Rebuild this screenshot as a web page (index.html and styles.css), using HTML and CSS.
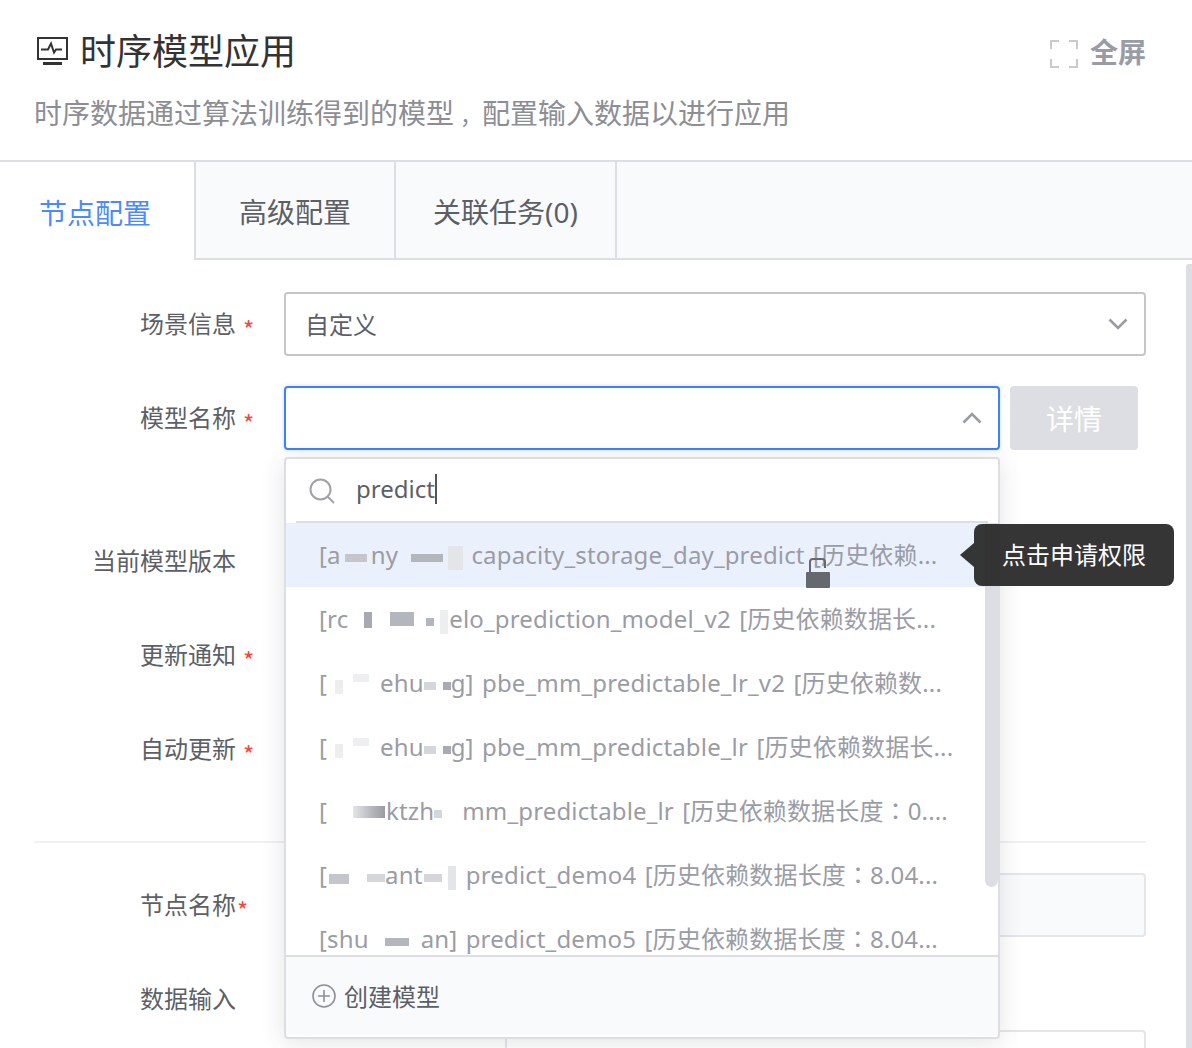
FILE: index.html
```html
<!DOCTYPE html>
<html>
<head>
  <meta charset="UTF-8">
  <title>时序模型应用</title>
  <link rel="stylesheet" href="styles.css">
</head>
<body>
<div class="page">
  <header class="head">
    <div class="head-top">
      <h1 class="title">
        <svg class="title-icon" viewBox="0 0 32 28" fill="none" stroke="#333" stroke-width="2">
          <rect x="2" y="1" width="29" height="21"/>
          <path d="M5 12.500h7l3-6 3 9 2-3h6"/>
          <path d="M7 26.500h19" stroke-width="3"/>
        </svg>
        <span class="title-text">时序模型应用</span>
      </h1>
      <div class="fullscreen">
        <svg class="full-icon" viewBox="0 0 28 28" fill="none" stroke="#c8cad0" stroke-width="2">
          <path d="M1 9V1h8M19 1h8v8M27 19v8h-8M9 27H1v-8"/>
        </svg>
        <span class="full-text">全屏</span>
      </div>
    </div>
    <p class="desc">时序数据通过算法训练得到的模型<span class="comma">，</span>配置输入数据以进行应用</p>
  </header>

  <nav class="tabs">
    <div class="tab tab-active">节点配置</div>
    <div class="tab">高级配置</div>
    <div class="tab">关联任务(0)</div>
  </nav>

  <main class="form">
    <div class="row">
      <label class="label">场景信息</label><span class="star">*</span>
      <div class="select">
        <span class="select-text">自定义</span>
        <svg class="chev" viewBox="0 0 20 12" fill="none" stroke="#9a9ca5" stroke-width="2.6"><path d="M1.5 1.5 10 10l8.500-8.500"/></svg>
      </div>
    </div>

    <div class="row">
      <label class="label">模型名称</label><span class="star">*</span>
      <div class="control">
        <div class="select select-open">
          <svg class="chev" viewBox="0 0 20 12" fill="none" stroke="#9a9ca5" stroke-width="2.6"><path d="M1.500 10.500 10 2l8.500 8.500"/></svg>
        </div>
        <button class="detail" type="button">详情</button>

        <div class="dropdown">
          <div class="search">
            <svg class="search-icon" viewBox="0 0 26 26" fill="none" stroke="#a0a2a8" stroke-width="2"><circle cx="11.500" cy="11.500" r="10"/><path d="m19 19 6 6"/></svg>
            <span class="search-text">predict</span><i class="caret"></i>
          </div>
          <ul class="options">
            <li class="option option-hover">[a<i class="smudge s1"></i>ny<i class="smudge s2"></i> capacity_storage_day_predict [历史依赖...
              <svg class="lock" viewBox="0 0 24 31"><path d="M4 16V5a3 3 0 0 1 3-3h9a3 3 0 0 1 3 3v6" fill="none" stroke="#666870" stroke-width="2"/><rect y="15" width="24" height="16" rx="1" fill="#666870"/></svg>
            </li>
            <li class="option">[rc<i class="smudge s3"></i>elo_prediction_model_v2 [历史依赖数据长...</li>
            <li class="option">[<i class="smudge s4"></i>ehu<i class="smudge s5"></i>g] pbe_mm_predictable_lr_v2 [历史依赖数...</li>
            <li class="option">[<i class="smudge s4"></i>ehu<i class="smudge s5"></i>g] pbe_mm_predictable_lr [历史依赖数据长...</li>
            <li class="option">[<i class="smudge s6"></i>ktzh<i class="smudge s7"></i>mm_predictable_lr [历史依赖数据长度<span class="punct">：</span>0....</li>
            <li class="option">[<i class="smudge s8"></i>ant<i class="smudge s9"></i> predict_demo4 [历史依赖数据长度<span class="punct">：</span>8.04...</li>
            <li class="option">[shu<i class="smudge s10"></i>an] predict_demo5 [历史依赖数据长度<span class="punct">：</span>8.04...</li>
          </ul>
          <div class="thumb"></div>
          <div class="create">
            <svg class="plus" viewBox="0 0 24 24" fill="none" stroke="#8e9098" stroke-width="1.600"><circle cx="12" cy="12" r="11"/><path d="M12 6v12M6 12h12"/></svg>
            <span class="create-text">创建模型</span>
          </div>
          <div class="tip">点击申请权限</div>
        </div>
      </div>
    </div>

    <div class="row row-version">
      <label class="label">当前模型版本</label>
    </div>
    <div class="row">
      <label class="label">更新通知</label><span class="star">*</span>
    </div>
    <div class="row row-last">
      <label class="label">自动更新</label><span class="star">*</span>
    </div>

    <hr class="divider">

    <div class="row">
      <label class="label">节点名称</label><span class="star star-tight">*</span>
      <div class="input"></div>
    </div>
    <div class="row row-data">
      <label class="label">数据输入</label>
    </div>
    <div class="data-box"></div>
  </main>

  <div class="page-bar"></div>
</div>
</body>
</html>
```

FILE: styles.css
```css
* {
  box-sizing: border-box;
}
body {
  margin: 0;
  font-family: "Noto Sans", "Noto Sans CJK SC", sans-serif;
  color: #5c5f66;
  background: #fff;
}
.page {
  position: relative;
  height: 1048px;
  overflow: hidden;
}
.punct {
  font-family: "Noto Sans CJK TC", sans-serif;
  line-height: 1;
}
.comma {
  display: inline-block;
  width: 28px;
  padding-left: 6px;
  font-size: 22px;
  line-height: 1;
}

/* Header */
.head {
  height: 160px;
  padding: 26px 46px 0 34px;
}
.head-top {
  display: flex;
  justify-content: space-between;
  align-items: center;
  height: 52px;
}
.title {
  display: flex;
  align-items: center;
  gap: 12px;
  margin: 0;
  font-size: 36px;
  font-weight: 400;
  color: #333;
}
.title-text {
  line-height: 52px;
}
.title-icon {
  width: 32px;
  height: 28px;
  margin: 0 0 2px 2px;
}
.fullscreen {
  display: flex;
  align-items: center;
  gap: 12px;
  font-size: 28px;
  font-weight: 700;
  color: #9a9ca5;
}
.full-text {
  padding-bottom: 2px;
}
.full-icon {
  width: 28px;
  height: 28px;
  margin-top: 4px;
}
.desc {
  margin: 15px 0 0;
  font-size: 28px;
  line-height: 40px;
  color: #8c8e94;
}

/* Tabs */
.tabs {
  display: flex;
  height: 100px;
  border-top: 2px solid #dcdee3;
  border-bottom: 2px solid #dcdee3;
  background: #f9fafc;
}
.tab {
  display: flex;
  align-items: center;
  justify-content: center;
  width: 200px;
  padding-top: 2px;
  border-right: 2px solid #dcdee3;
  font-size: 28px;
}
.tab:last-child {
  width: 221px;
}
.tab-active {
  width: 196px;
  height: 98px;
  padding-right: 4px;
  background: #fff;
  color: #4b8bf5;
}

/* Form */
.form {
  padding: 32px 46px 0 34px;
}
.row {
  display: flex;
  align-items: flex-start;
  height: 64px;
  margin-bottom: 30px;
}
.label {
  width: 202px;
  flex: none;
  text-align: right;
  font-size: 24px;
  line-height: 64px;
}
.star {
  width: 48px;
  flex: none;
  padding: 5px 0 0 7px;
  font-family: "Noto Sans CJK SC", sans-serif;
  font-size: 24px;
  line-height: 64px;
  color: #f5453c;
}
.star-tight {
  padding-left: 1px;
}
.row-version {
  margin-top: 79px;
}
.row-last {
  margin-bottom: 60px;
}
.row-data {
  margin-bottom: 0;
}
.select {
  position: relative;
  display: flex;
  align-items: center;
  flex: 1;
  height: 64px;
  padding: 0 19px;
  border: 2px solid #c4c6cc;
  border-radius: 4px;
  font-size: 24px;
}
.select-text {
  padding-bottom: 2px;
}
.chev {
  position: absolute;
  right: 16px;
  top: 24px;
  width: 20px;
  height: 12px;
}
.control {
  position: relative;
  display: flex;
  flex: 1;
  gap: 10px;
}
.select-open {
  flex: none;
  width: 716px;
  border-color: #3f80f5;
  box-shadow: 0 0 4px rgba(63, 128, 245, .3);
}
.detail {
  width: 128px;
  height: 64px;
  padding: 0;
  border: 0;
  border-radius: 4px;
  background: #dcdee3;
  color: #fff;
  font: inherit;
  font-size: 28px;
}
.divider {
  height: 2px;
  margin: 0 0 30px;
  border: 0;
  background: #f0f1f3;
}
.input {
  flex: 1;
  height: 64px;
  border: 2px solid #e4e6ea;
  border-radius: 4px;
  background: #f9fafc;
}
.data-box {
  height: 40px;
  margin: -1px 0 0 471px;
  border: 2px solid #e4e6ea;
  border-radius: 4px;
}

/* Dropdown */
.dropdown {
  position: absolute;
  left: 0;
  top: 71px;
  z-index: 2;
  width: 716px;
  height: 582px;
  border: 2px solid #dcdee3;
  border-radius: 4px;
  background: #fff;
  box-shadow: 0 4px 24px rgba(60, 64, 80, .14);
}
.search {
  position: relative;
  display: flex;
  align-items: center;
  height: 64px;
  margin: 0 10px;
  padding-left: 60px;
  border-bottom: 2px solid #dcdee3;
  font-size: 24px;
}
.search-text {
  padding-bottom: 4px;
}
.search-icon {
  position: absolute;
  left: 13px;
  top: 19px;
  width: 26px;
  height: 26px;
}
.caret {
  width: 2px;
  height: 30px;
  margin-bottom: 2px;
  background: #555;
}
.options {
  height: 432px;
  margin: 0;
  padding: 0;
  list-style: none;
  overflow: hidden;
  font-size: 24px;
  letter-spacing: .15px;
  word-spacing: 2px;
  color: #9a9ca5;
}
.option {
  position: relative;
  height: 64px;
  padding-left: 33px;
  line-height: 64px;
  white-space: nowrap;
}
.option-hover {
  background: #eaf1fd;
}
.lock {
  position: absolute;
  left: 520px;
  top: 34px;
  width: 24px;
  height: 31px;
}
.thumb {
  position: absolute;
  right: 0;
  top: 64px;
  width: 13px;
  height: 364px;
  border-radius: 0 0 7px 7px;
  background: #dcdee3;
}
.create {
  display: flex;
  align-items: center;
  gap: 8px;
  height: 80px;
  padding-left: 26px;
  border-top: 2px solid #dcdee3;
  background: #f9fafc;
  font-size: 24px;
}
.create-text {
  padding-bottom: 2px;
}
.plus {
  width: 24px;
  height: 24px;
}
.tip {
  position: absolute;
  left: 688px;
  top: 65px;
  width: 200px;
  height: 62px;
  border-radius: 8px;
  background: rgba(40, 40, 40, .94);
  color: #fff;
  font-size: 24px;
  line-height: 62px;
  text-align: center;
}
.tip::before {
  content: "";
  position: absolute;
  left: -14px;
  top: 19px;
  border-top: 12px solid transparent;
  border-bottom: 12px solid transparent;
  border-right: 14px solid rgba(40, 40, 40, .94);
}

/* mosaic over account names */
.smudge {
  display: inline-block;
  height: 24px;
  vertical-align: middle;
  background-repeat: no-repeat;
}
.s1 {
  width: 30px;
  background-image: linear-gradient(#c4c6cc, #c4c6cc);
  background-size: 22px 8px;
  background-position: 4px 8px;
}
.s2 {
  width: 65px;
  background-image: linear-gradient(#b4b6bd, #b4b6bd), linear-gradient(#e4e5e9, #e4e5e9);
  background-size: 32px 8px, 15px 24px;
  background-position: 13px 8px, 50px 0;
}
.s3 {
  width: 101px;
  background-image: linear-gradient(#a8aab2, #a8aab2), linear-gradient(#b4b6bd, #b4b6bd), linear-gradient(#b4b6bd, #b4b6bd), linear-gradient(#eceef0, #eceef0);
  background-size: 8px 16px, 24px 14px, 8px 8px, 8px 24px;
  background-position: 16px 2px, 42px 2px, 78px 8px, 92px 0;
}
.s4 {
  width: 53px;
  background-image: linear-gradient(#eceef0, #eceef0), linear-gradient(#eceef0, #eceef0);
  background-size: 8px 14px, 16px 8px;
  background-position: 8px 6px, 26px 0;
}
.s5 {
  width: 27px;
  background-image: linear-gradient(#d4d6da, #d4d6da), linear-gradient(#a8aab2, #a8aab2);
  background-size: 12px 8px, 8px 8px;
  background-position: 0 8px, 19px 8px;
}
.s6 {
  width: 59px;
  background-image: linear-gradient(90deg, #e4e5e9, #b4b6bd 60%, #9a9ca5);
  background-size: 32px 12px;
  background-position: 26px 4px;
}
.s7 {
  width: 28px;
  background-image: linear-gradient(#d4d6da, #d4d6da);
  background-size: 8px 8px;
  background-position: 0 8px;
}
.s8 {
  width: 58px;
  background-image: linear-gradient(#c4c6cc, #c4c6cc), linear-gradient(#d4d6da, #d4d6da);
  background-size: 20px 10px, 18px 8px;
  background-position: 2px 8px, 40px 8px;
}
.s9 {
  width: 35px;
  background-image: linear-gradient(#d4d6da, #d4d6da), linear-gradient(#e4e5e9, #e4e5e9);
  background-size: 18px 8px, 8px 24px;
  background-position: 2px 8px, 26px 0;
}
.s10 {
  width: 52px;
  background-image: linear-gradient(#b4b6bd, #b4b6bd);
  background-size: 24px 8px;
  background-position: 16px 8px;
}

.page-bar {
  position: absolute;
  right: 0;
  top: 264px;
  bottom: 0;
  width: 6px;
  border-radius: 3px 0 0 0;
  background: #dcdee3;
}
```
